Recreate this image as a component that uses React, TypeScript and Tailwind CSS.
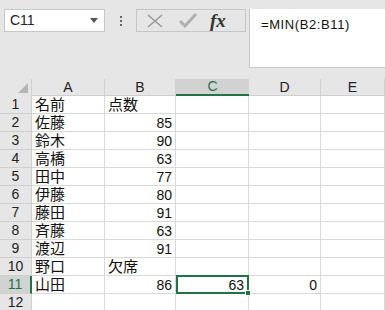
import React from "react";

const cols = [
  { key: "A", w: "w-[73px]" },
  { key: "B", w: "w-[71px]" },
  { key: "C", w: "w-[73px]" },
  { key: "D", w: "w-[72px]" },
  { key: "E", w: "flex-1" },
];

const rows: (string | number | null)[][] = [
  ["名前", "点数", null, null],
  ["佐藤", 85, null, null],
  ["鈴木", 90, null, null],
  ["高橋", 63, null, null],
  ["田中", 77, null, null],
  ["伊藤", 80, null, null],
  ["藤田", 91, null, null],
  ["斉藤", 63, null, null],
  ["渡辺", 91, null, null],
  ["野口", "欠席", null, null],
  ["山田", 86, 63, 0],
  [null, null, null, null],
];

const font = "font-['Liberation_Sans','Noto_Sans_CJK_JP',sans-serif]";

function Cell({ v }: { v: string | number | null }) {
  if (v === null) return null;
  if (typeof v === "number")
    return <span className="ml-auto pr-[3px] text-[14px] leading-none text-[#111]">{v}</span>;
  return <span className="pl-[3px] text-[15px] leading-none text-[#111]">{v}</span>;
}

export default function App() {
  return (
    <div className={`w-[385px] h-[310px] overflow-hidden bg-white ${font}`}>
      {/* formula area */}
      <div className="h-[79px] bg-[#e6e6e6] flex items-start pt-[9px] pl-[4px]">
        <div className="w-[101px] h-[23px] bg-white border border-[#c6c6c6] flex items-center pl-[5px] pr-[6px]">
          <span className="text-[14px] text-[#222]">C11</span>
          <svg className="ml-auto" width="8" height="5" viewBox="0 0 8 5">
            <path d="M0 0H8L4 5Z" fill="#555" />
          </svg>
        </div>
        <div className="w-[31px] h-[23px] flex flex-col items-center justify-center gap-[2px]">
          <span className="w-[2px] h-[2px] bg-[#666]" />
          <span className="w-[2px] h-[2px] bg-[#666]" />
          <span className="w-[2px] h-[2px] bg-[#666]" />
        </div>
        <div className="w-[110px] h-[23px] border border-[#c6c6c6] flex items-center">
          <svg className="ml-[10px]" width="16" height="14" viewBox="0 0 16 14">
            <path d="M1 1L15 13M15 1L1 13" stroke="#9a9a9a" strokeWidth="1.6" />
          </svg>
          <svg className="ml-[16px]" width="18" height="15" viewBox="0 0 18 15">
            <path d="M1 8L6 13L17 1" stroke="#b0b0b0" strokeWidth="3" fill="none" />
          </svg>
          <span className="ml-[13px] font-['Liberation_Serif',serif] italic font-bold text-[19px] leading-none text-[#333]">
            fx
          </span>
        </div>
        <div className="ml-[3px] flex-1 h-[59px] bg-white border-l border-b border-[#c6c6c6] pl-[11px] pt-[3px]">
          <span className="text-[13px] tracking-[0.6px] text-[#111]">=MIN(B2:B11)</span>
        </div>
      </div>

      {/* header row */}
      <div className="flex h-[17px] bg-[#e6e6e6]">
        <div className="w-[32px] border-r border-[#cfcfcf] flex items-end justify-end pr-[3px] pb-[3px]">
          <svg width="10" height="10" viewBox="0 0 10 10">
            <path d="M10 0V10H0Z" fill="#b5b5b5" />
          </svg>
        </div>
        {cols.map((c) =>
          c.key === "C" ? (
            <div
              key={c.key}
              className={`${c.w} bg-[#d2d2d2] border-b-2 border-[#217346] flex items-center justify-center text-[14px] text-[#217346]`}
            >
              {c.key}
            </div>
          ) : (
            <div
              key={c.key}
              className={`${c.w} border-r border-b border-[#cfcfcf] flex items-center justify-center text-[14px] text-[#222]`}
            >
              {c.key}
            </div>
          )
        )}
      </div>

      {/* body */}
      {rows.map((r, i) => {
        const n = i + 1;
        const sel = n === 11;
        return (
          <div key={n} className="flex h-[18px]">
            <div
              className={`w-[32px] flex items-center justify-center text-[14px] border-b ${
                sel
                  ? "bg-[#d2d2d2] text-[#217346] border-r-2 border-r-[#217346] border-b-[#cfcfcf]"
                  : "bg-[#e6e6e6] text-[#222] border-r border-[#cfcfcf]"
              }`}
            >
              {n}
            </div>
            {cols.map((c, j) => {
              const v = j < 4 ? r[j] : null;
              if (sel && c.key === "C") {
                return (
                  <div
                    key={c.key}
                    className={`${c.w} relative -mt-px h-[19px] border-2 border-[#217346] flex items-center`}
                  >
                    <Cell v={v} />
                    <span className="absolute -right-[4px] -bottom-[4px] w-[6px] h-[6px] bg-[#217346] border border-white" />
                  </div>
                );
              }
              return (
                <div
                  key={c.key}
                  className={`${c.w} border-r border-b border-[#d9d9d9] flex items-center`}
                >
                  <Cell v={v} />
                </div>
              );
            })}
          </div>
        );
      })}
    </div>
  );
}
